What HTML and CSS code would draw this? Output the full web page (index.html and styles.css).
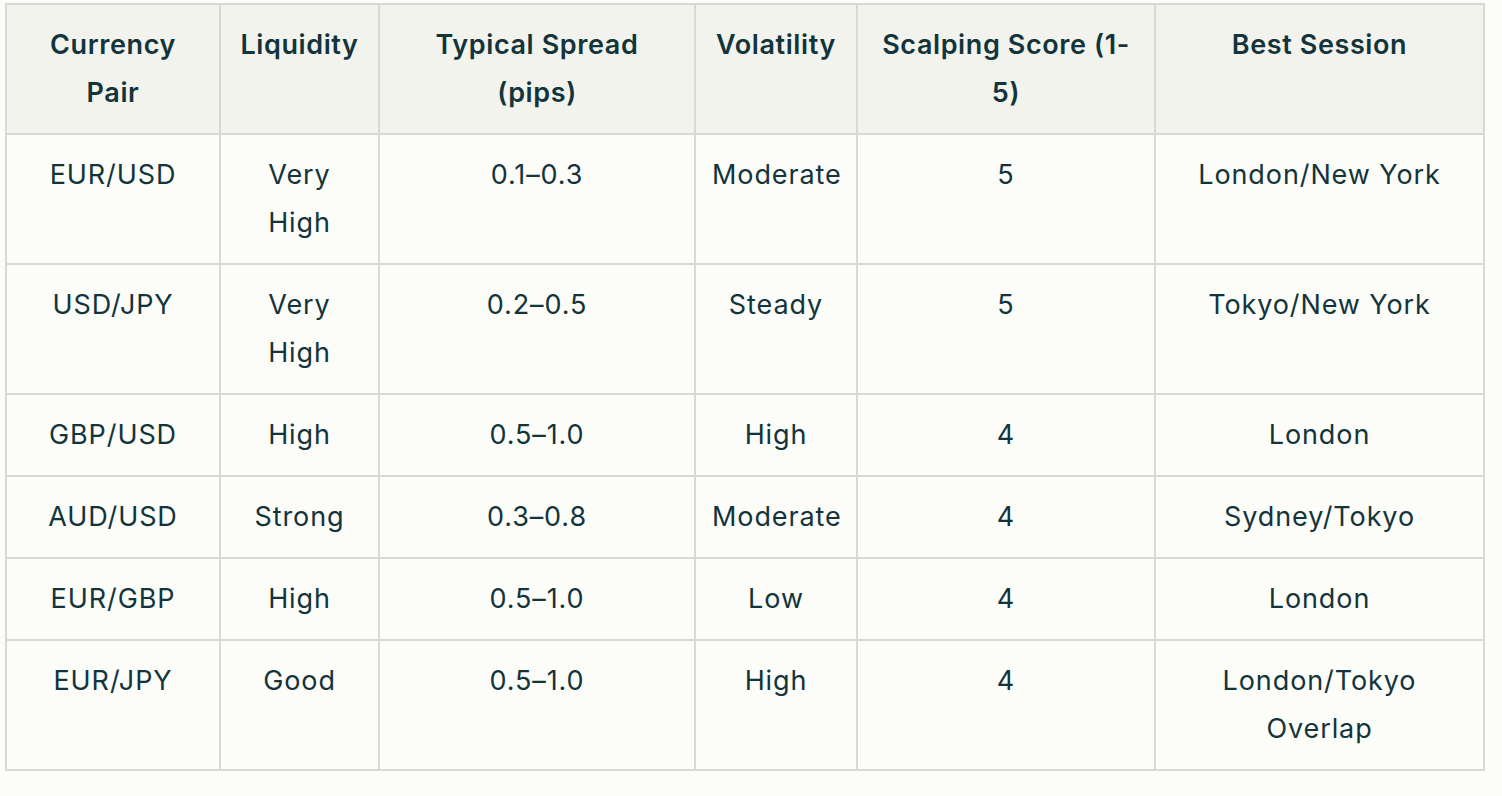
FILE: index.html
```html
<!DOCTYPE html>
<html lang="en">
<head>
<meta charset="utf-8">
<title>Currency pairs for scalping</title>
<link rel="stylesheet" href="styles.css">
</head>
<body>
<div class="wrap">
<table class="pairs">
  <colgroup>
    <col class="c1"><col class="c2"><col class="c3"><col class="c4"><col class="c5"><col class="c6">
  </colgroup>
  <thead>
    <tr>
      <th>Currency Pair</th>
      <th>Liquidity</th>
      <th>Typical Spread (pips)</th>
      <th>Volatility</th>
      <th>Scalping Score (1-5)</th>
      <th>Best Session</th>
    </tr>
  </thead>
  <tbody>
    <tr><td>EUR/USD</td><td>Very High</td><td>0.1–0.3</td><td>Moderate</td><td>5</td><td>London/New York</td></tr>
    <tr><td>USD/JPY</td><td>Very High</td><td>0.2–0.5</td><td>Steady</td><td>5</td><td>Tokyo/New York</td></tr>
    <tr><td>GBP/USD</td><td>High</td><td>0.5–1.0</td><td>High</td><td>4</td><td>London</td></tr>
    <tr><td>AUD/USD</td><td>Strong</td><td>0.3–0.8</td><td>Moderate</td><td>4</td><td>Sydney/Tokyo</td></tr>
    <tr><td>EUR/GBP</td><td>High</td><td>0.5–1.0</td><td>Low</td><td>4</td><td>London</td></tr>
    <tr><td>EUR/JPY</td><td>Good</td><td>0.5–1.0</td><td>High</td><td>4</td><td>London/Tokyo Overlap</td></tr>
  </tbody>
</table>
</div>
</body>
</html>
```
FILE: styles.css
```css
html, body {
  margin: 0;
  padding: 0;
  background: #fcfcf9;
}
body {
  font-family: Inter, "Noto Sans", "Liberation Sans", sans-serif;
  color: #13343b;
}
.wrap {
  padding: 3px 0 0 5px;
}
.pairs {
  border-collapse: collapse;
  table-layout: fixed;
  width: 1478px;
  border: 2px solid #d7d9d6;
  font-size: 27px;
  line-height: 48px;
}
.c1 { width: 214px; }
.c2 { width: 159px; }
.c3 { width: 316px; }
.c4 { width: 162px; }
.c5 { width: 298px; }
.c6 { width: 329px; }
.pairs th,
.pairs td {
  border: 2px solid #d7d9d6;
  padding: 16px 16px;
  text-align: center;
  vertical-align: top;
}
.pairs th {
  background: #f3f3ee;
  font-weight: 600;
  letter-spacing: 0.6px;
}
.pairs td {
  background: #fcfcf9;
  font-weight: 400;
  letter-spacing: 0.9px;
}
```
